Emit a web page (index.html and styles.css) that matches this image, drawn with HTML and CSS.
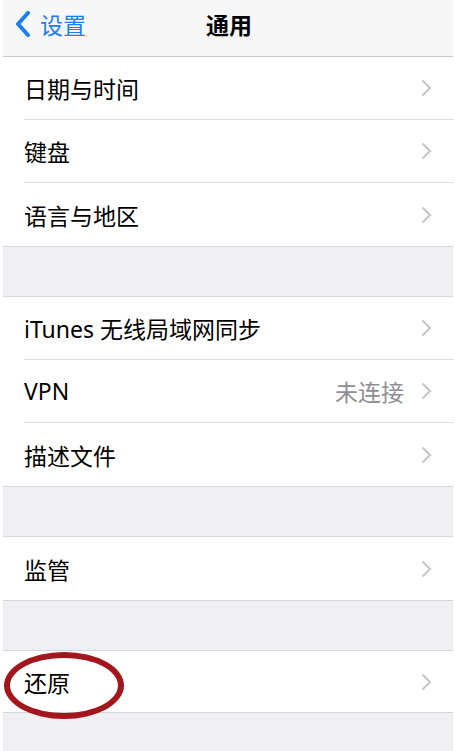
FILE: index.html
```html
<!DOCTYPE html>
<html lang="zh-CN">
<head>
    <meta charset="UTF-8">
    <meta name="viewport" content="width=device-width, initial-scale=1.0">
    <title>通用</title>
    <link rel="stylesheet" href="styles.css">
</head>
<body>
    <div class="screen">
        <div class="navbar">
            <a class="back" href="#">
                <svg width="18" height="26" viewBox="0 0 18 26"><polyline points="14,2 4,13 14,24" fill="none" stroke="#1a7ff0" stroke-width="4" stroke-linecap="round" stroke-linejoin="round"/></svg>
                <span>设置</span>
            </a>
            <div class="title">通用</div>
            <div></div>
        </div>

        <div class="group">
            <div class="row"><div class="row-inner"><span class="label">日期与时间</span><svg class="chevron" width="11" height="18" viewBox="0 0 11 18"><polyline points="1.5,1.5 9,9 1.5,16.5" fill="none" stroke="#c7c7cc" stroke-width="2.2"/></svg></div></div>
            <div class="row"><div class="row-inner"><span class="label">键盘</span><svg class="chevron" width="11" height="18" viewBox="0 0 11 18"><polyline points="1.5,1.5 9,9 1.5,16.5" fill="none" stroke="#c7c7cc" stroke-width="2.2"/></svg></div></div>
            <div class="row"><div class="row-inner"><span class="label">语言与地区</span><svg class="chevron" width="11" height="18" viewBox="0 0 11 18"><polyline points="1.5,1.5 9,9 1.5,16.5" fill="none" stroke="#c7c7cc" stroke-width="2.2"/></svg></div></div>
        </div>

        <div class="group">
            <div class="row"><div class="row-inner"><span class="label">iTunes 无线局域网同步</span><svg class="chevron" width="11" height="18" viewBox="0 0 11 18"><polyline points="1.5,1.5 9,9 1.5,16.5" fill="none" stroke="#c7c7cc" stroke-width="2.2"/></svg></div></div>
            <div class="row"><div class="row-inner"><span class="label">VPN</span><span class="detail">未连接</span><svg class="chevron" width="11" height="18" viewBox="0 0 11 18"><polyline points="1.5,1.5 9,9 1.5,16.5" fill="none" stroke="#c7c7cc" stroke-width="2.2"/></svg></div></div>
            <div class="row"><div class="row-inner"><span class="label">描述文件</span><svg class="chevron" width="11" height="18" viewBox="0 0 11 18"><polyline points="1.5,1.5 9,9 1.5,16.5" fill="none" stroke="#c7c7cc" stroke-width="2.2"/></svg></div></div>
        </div>

        <div class="group">
            <div class="row"><div class="row-inner"><span class="label">监管</span><svg class="chevron" width="11" height="18" viewBox="0 0 11 18"><polyline points="1.5,1.5 9,9 1.5,16.5" fill="none" stroke="#c7c7cc" stroke-width="2.2"/></svg></div></div>
        </div>

        <div class="group">
            <div class="row row-short marked"><div class="row-inner"><span class="label">还原</span><svg class="chevron" width="11" height="18" viewBox="0 0 11 18"><polyline points="1.5,1.5 9,9 1.5,16.5" fill="none" stroke="#c7c7cc" stroke-width="2.2"/></svg></div></div>
        </div>
    </div>
</body>
</html>
```

FILE: styles.css
```css
body {
    margin: 0;
    padding: 0;
    background: #ffffff;
    font-family: "Noto Sans", "Noto Sans CJK SC", sans-serif;
}
.screen {
    margin: 0 2px 0 3px;
    height: 751px;
    background: #efeff4;
    overflow: hidden;
}
.navbar {
    height: 57px;
    box-sizing: border-box;
    padding-bottom: 8px;
    background: #f7f7f7;
    border-bottom: 1px solid #c8c7cc;
    display: grid;
    grid-template-columns: 1fr auto 1fr;
    align-items: center;
}
.back {
    display: flex;
    align-items: center;
    gap: 8px;
    padding-left: 11px;
    color: #1a7ff0;
    text-decoration: none;
    font-size: 23px;
}
.back svg {
    display: block;
}
.title {
    font-size: 23px;
    font-weight: 700;
    color: #000;
    margin-left: 2px;
}
.group {
    background: #ffffff;
    border-bottom: 1px solid #d6d6da;
    margin-bottom: 49px;
}
.group + .group {
    border-top: 1px solid #d6d6da;
}
.row {
    height: 63px;
    padding-left: 21px;
    position: relative;
}
.group:first-of-type .row {
    height: 63.5px;
}
.group:first-of-type {
    margin-bottom: 48.5px;
}
.row-short {
    height: 61px;
}
.row-inner {
    height: 100%;
    display: flex;
    align-items: center;
    padding-right: 21px;
    box-sizing: border-box;
    border-bottom: 1px solid #dcdce0;
}
.row:last-child .row-inner {
    border-bottom: none;
}
.label {
    flex: 1;
    font-size: 23px;
    color: #000;
}
.detail {
    font-size: 23px;
    color: #8e8e93;
    margin-right: 17px;
}
.chevron {
    display: block;
}
.marked::after {
    content: "";
    position: absolute;
    left: 1px;
    top: 1px;
    width: 108px;
    height: 55px;
    border: 6px solid #a3161c;
    border-radius: 50%;
}
```
